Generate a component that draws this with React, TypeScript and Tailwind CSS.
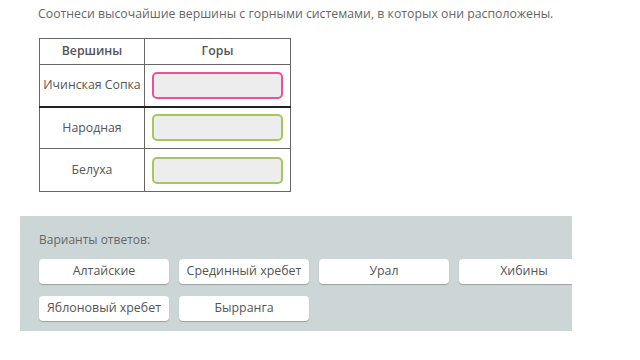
export default function App() {
  const rows = [
    { name: "Ичинская Сопка", border: "border-[#f0509a]", h: "h-[42px]" },
    { name: "Народная", border: "border-[#a6c85a]", h: "h-[42px]" },
    { name: "Белуха", border: "border-[#a6c85a]", h: "h-[43px]" },
  ]
  const options = ["Алтайские", "Срединный хребет", "Урал", "Хибины", "Яблоновый хребет", "Бырранга"]

  return (
    <div className="w-[640px] h-[360px] bg-white font-['Open_Sans',sans-serif] text-[#666] overflow-hidden">
      <p className="pl-[38px] pt-[5px] text-[12.3px] leading-[18px]">
        Соотнеси высочайшие вершины с горными системами, в которых они расположены.
      </p>

      <table className="ml-[39px] mt-[15px] table-fixed w-[251px] border-collapse border border-[#666] text-[12.3px] text-[#555]">
        <colgroup>
          <col className="w-[105px]" />
          <col className="w-[146px]" />
        </colgroup>
        <thead>
          <tr className="h-[26px]">
            <th className="border border-[#666] font-semibold">Вершины</th>
            <th className="border border-[#666] font-semibold">Горы</th>
          </tr>
        </thead>
        <tbody>
          {rows.map((r, i) => (
            <tr key={r.name} className={i === 0 ? `${r.h} border-b-2 border-b-[#222]` : r.h}>
              <td className="border-l border-r border-t border-[#666] text-center px-[2px] whitespace-nowrap">{r.name}</td>
              <td className="border border-[#666] px-[7px]">
                <div className={`h-[27px] rounded-[5px] border-2 bg-[#ededed] ${r.border}`} />
              </td>
            </tr>
          ))}
        </tbody>
      </table>

      <div className="ml-[20px] mt-[24px] w-[552px] h-[115px] bg-[#cdd6d6] overflow-hidden pl-[19px] pt-[15px]">
        <p className="text-[12px] leading-[18px] text-[#666]">Варианты ответов:</p>
        <div className="mt-[10px] grid grid-cols-[repeat(4,130px)] gap-x-[10px] gap-y-[12px]">
          {options.map((o) => (
            <div
              key={o}
              className="h-[25px] rounded-[4px] bg-white shadow-[0_1px_1px_rgba(0,0,0,0.25)] flex items-center justify-center text-[12.4px] text-[#555] whitespace-nowrap"
            >
              {o}
            </div>
          ))}
        </div>
      </div>
    </div>
  )
}
